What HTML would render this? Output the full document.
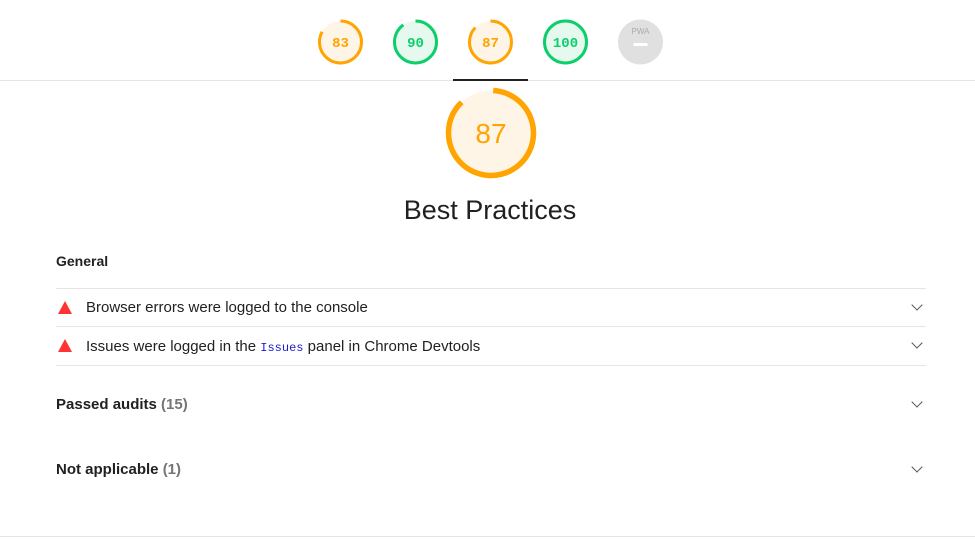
<!DOCTYPE html>
<html><head><style>
body{margin:0;width:975px;height:539px;background:#fff;font-family:"Liberation Sans",sans-serif;color:#212121;position:relative;overflow:hidden}
.a{position:absolute}
.hr{position:absolute;height:1px;background:#e5e5e5}
.g text{font-family:"Liberation Mono",monospace;font-weight:bold}
.row{position:absolute;left:86px;font-size:15px;color:#212121}
.tri{position:absolute;left:58px;width:0;height:0;border-left:7px solid transparent;border-right:7px solid transparent;border-bottom:13px solid #f33}
.chev{position:absolute;left:913px;width:7px;height:7px;border-right:1.8px solid #555;border-bottom:1.8px solid #555;transform:rotate(45deg)}
</style></head><body>
<svg class="a g" style="left:0;top:0" width="975" height="80">
<g transform="translate(340.5,42)"><circle r="21" fill="#fff5e6"/><circle r="21" fill="none" stroke="#ffa400" stroke-width="3" stroke-dasharray="109.5 200" transform="rotate(-90)"/><text y="5" text-anchor="middle" font-size="14" fill="#ffa400">83</text></g>
<g transform="translate(415.5,42)"><circle r="21" fill="#e6f9ef"/><circle r="21" fill="none" stroke="#0cce6b" stroke-width="3" stroke-dasharray="118.8 200" transform="rotate(-90)"/><text y="5" text-anchor="middle" font-size="14" fill="#0cce6b">90</text></g>
<g transform="translate(490.5,42)"><circle r="21" fill="#fff5e6"/><circle r="21" fill="none" stroke="#ffa400" stroke-width="3" stroke-dasharray="114.8 200" transform="rotate(-90)"/><text y="5" text-anchor="middle" font-size="14" fill="#ffa400">87</text></g>
<g transform="translate(565.5,42)"><circle r="21" fill="#e6f9ef"/><circle r="21" fill="none" stroke="#0cce6b" stroke-width="3"/><text y="5" text-anchor="middle" font-size="14" fill="#0cce6b">100</text></g>
<g transform="translate(640.5,42)"><circle r="22.5" fill="#e0e0e0"/><text y="-8" text-anchor="middle" font-size="8" fill="#aaa" style="font-family:'Liberation Sans';font-weight:normal">PWA</text><rect x="-7" y="1" width="14" height="3" fill="#fff"/></g>
</svg>
<div class="hr" style="left:0;top:80px;width:975px"></div>
<div class="a" style="left:453px;top:79px;width:75px;height:2px;background:#212121"></div>
<svg class="a" style="left:441px;top:83px" width="100" height="100">
<g transform="translate(50,50)"><circle r="42.5" fill="#fff5e6"/><circle r="42.5" fill="none" stroke="#ffa400" stroke-width="5.5" stroke-dasharray="232 300" transform="rotate(-87)"/><text y="10" text-anchor="middle" font-size="28" fill="#ffa400" font-family="Liberation Sans">87</text></g>
</svg>
<div class="a" style="left:0;width:980px;top:195px;text-align:center;font-size:27px;color:#212121">Best Practices</div>
<div class="a" style="left:56px;top:253px;font-size:14px;font-weight:bold">General</div>
<div class="hr" style="left:56px;top:288px;width:870px"></div>
<div class="tri" style="top:301px"></div>
<div class="row" style="top:299px">Browser errors were logged to the console</div>
<div class="chev" style="top:301px"></div>
<div class="hr" style="left:56px;top:326px;width:870px"></div>
<div class="tri" style="top:339px"></div>
<div class="row" style="top:338px">Issues were logged in the <span style="font-family:'Liberation Mono',monospace;font-size:12px;color:#1a1ad0">Issues</span> panel in Chrome Devtools</div>
<div class="chev" style="top:339px"></div>
<div class="hr" style="left:56px;top:365px;width:870px"></div>
<div class="a" style="left:56px;top:396px;font-size:15px;font-weight:bold">Passed audits <span style="color:#757575">(15)</span></div>
<div class="chev" style="top:398px"></div>
<div class="a" style="left:56px;top:461px;font-size:15px;font-weight:bold">Not applicable <span style="color:#757575">(1)</span></div>
<div class="chev" style="top:463px"></div>
<div class="hr" style="left:0;top:536px;width:975px"></div>
</body></html>
